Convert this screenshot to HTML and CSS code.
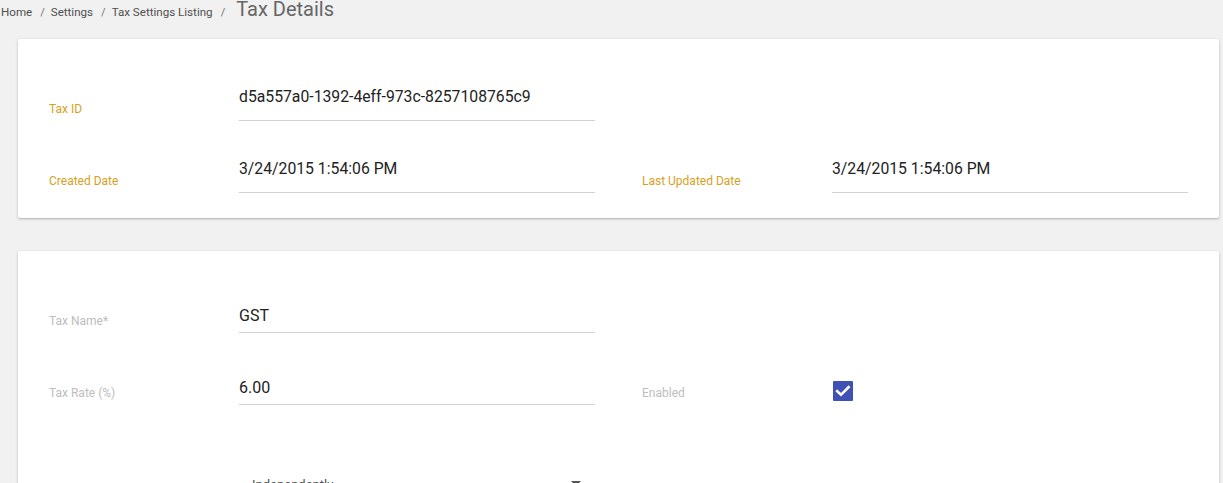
FILE: index.html
```html
<!DOCTYPE html>
<html lang="en">
<head>
<meta charset="utf-8">
<title>Tax Details</title>
<link rel="stylesheet" href="styles.css">
</head>
<body>
<nav class="crumbs">
  <a class="crumb">Home</a><span class="sep">/</span>
  <a class="crumb">Settings</a><span class="sep">/</span>
  <a class="crumb">Tax Settings Listing</a><span class="sep">/</span>
  <h1 class="page-title">Tax Details</h1>
</nav>

<section class="card card-info">
  <div class="form-grid">
    <div class="field">
      <label class="label label-gold">Tax ID</label>
      <div class="value value-display">d5a557a0-1392-4eff-973c-8257108765c9</div>
    </div>
    <div class="field empty"></div>
    <div class="field">
      <label class="label label-gold">Created Date</label>
      <div class="value value-display">3/24/2015 1:54:06 PM</div>
    </div>
    <div class="field">
      <label class="label label-gold">Last Updated Date</label>
      <div class="value value-display">3/24/2015 1:54:06 PM</div>
    </div>
  </div>
</section>

<section class="card card-edit">
  <div class="form-grid">
    <div class="field">
      <label class="label label-grey">Tax Name*</label>
      <div class="value value-input">GST</div>
    </div>
    <div class="field empty"></div>
    <div class="field">
      <label class="label label-grey">Tax Rate (%)</label>
      <div class="value value-input">6.00</div>
    </div>
    <div class="field">
      <label class="label label-grey">Enabled</label>
      <div class="check-cell">
        <svg class="checkbox" width="20" height="20" viewBox="0 0 20 20" aria-hidden="true">
          <rect x="0" y="0" width="20" height="20" rx="1" fill="#3f51b5"/>
          <path d="M4.2 10.2 L8 13.8 L15.6 6.2" fill="none" stroke="#fff" stroke-width="2.6" stroke-linecap="square"/>
        </svg>
      </div>
    </div>
    <div class="field field-tall">
      <label class="label label-grey"></label>
      <div class="select">
        <span class="select-text">Independently</span>
        <span class="caret"></span>
      </div>
    </div>
  </div>
</section>
</body>
</html>
```

FILE: styles.css
```css
* { box-sizing: border-box; }

html, body {
  margin: 0;
  padding: 0;
  background: #f1f1f1;
  font-family: Roboto, "Noto Sans", Arial, sans-serif;
  color: #212121;
}

body {
  width: 1223px;
  height: 483px;
  overflow: hidden;
}

.crumbs {
  display: flex;
  align-items: baseline;
  height: 20px;
  margin-top: -1px;
  padding-left: 1px;
  line-height: 20px;
}

.crumb {
  font-size: 11.6px;
  color: #505050;
  text-decoration: none;
}

.sep {
  font-size: 11px;
  color: #707070;
  padding: 0 6px 0 8px;
}

.page-title {
  margin: 0 0 0 5px;
  font-size: 20px;
  font-weight: 400;
  color: #666;
  line-height: 20px;
}

.card {
  background: #fff;
  margin: 20px 4px 0 18px;
  border-radius: 2px;
  box-shadow: 0 1px 3px rgba(0, 0, 0, 0.22), 0 1px 1px rgba(0, 0, 0, 0.08);
  padding: 34px 30px 25px 31px;
}

.card-edit {
  margin-top: 33px;
  padding-bottom: 40px;
}

.form-grid {
  display: grid;
  grid-template-columns: 546px 547px;
  column-gap: 47px;
  row-gap: 24px;
}

.field {
  display: grid;
  grid-template-columns: 190px 356px;
  height: 48px;
}

.label {
  align-self: end;
  font-size: 12px;
  line-height: 14px;
  padding-bottom: 5px;
}

.label-gold { color: #d6a11c; }
.label-grey { color: #bdbdbd; }

.value {
  border-bottom: 1px solid #d2d2d2;
  white-space: nowrap;
  overflow: hidden;
}

.value-display {
  font-size: 15.75px;
  line-height: 44px;
  padding-top: 2px;
  color: #222;
}

.value-input {
  display: flex;
  align-items: flex-end;
  font-size: 16px;
  line-height: 18px;
  padding-bottom: 7px;
  color: #222;
}

.check-cell {
  align-self: end;
  padding: 0 0 3px 1px;
  height: 24px;
}

.checkbox { display: block; }

.field-tall { height: 80px; }

.select {
  position: relative;
  padding: 45px 0 0 13px;
  border-bottom: 1px solid #d2d2d2;
}

.select-text {
  font-size: 13px;
  line-height: 16px;
  color: #555;
}

.caret {
  position: absolute;
  top: 52px;
  right: 14px;
  width: 0;
  height: 0;
  border-left: 5px solid transparent;
  border-right: 5px solid transparent;
  border-top: 5px solid #555;
}
```
